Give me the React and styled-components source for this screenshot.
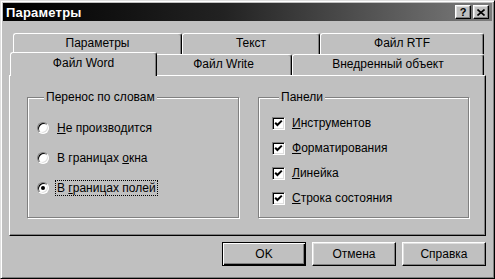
import styled, { createGlobalStyle } from "styled-components";

const GlobalStyle = createGlobalStyle`
  html, body {
    margin: 0;
    padding: 0;
    background: #c0c0c0;
  }
  body {
    font-family: "Liberation Sans", Arial, sans-serif;
    font-size: 12px;
    color: #000;
  }
`;

const Window = styled.div`
  width: 495px;
  height: 279px;
  box-sizing: border-box;
  background: #c0c0c0;
  border: 1px solid;
  border-color: #dfdfdf #000 #000 #dfdfdf;
  box-shadow: inset 1px 1px #fff, inset -1px -1px #808080;
  padding: 2px;
  display: flex;
  flex-direction: column;
`;

const TitleBar = styled.div`
  height: 18px;
  display: flex;
  align-items: center;
  padding: 0 3px 0 3px;
  background: linear-gradient(to right, #000 0%, #222 45%, #7c7c7c 100%);
`;

const Title = styled.span`
  flex: 1;
  color: #fff;
  font-weight: bold;
  font-size: 13px;
  letter-spacing: 0.2px;
`;

const CaptionButton = styled.button`
  width: 16px;
  height: 14px;
  margin-left: ${(p) => (p.$gap ? "2px" : "0")};
  padding: 0;
  background: #c0c0c0;
  border: 1px solid;
  border-color: #fff #000 #000 #fff;
  box-shadow: inset -1px -1px #808080, inset 1px 1px #dfdfdf;
  display: flex;
  align-items: center;
  justify-content: center;
  font-family: "Liberation Sans", Arial, sans-serif;
  font-weight: bold;
  font-size: 11px;
  line-height: 1;
  color: #000;
`;

const Content = styled.div`
  padding: 12px 6px 0 6px;
  display: flex;
  flex-direction: column;
`;

const TabControl = styled.div`
  display: flex;
  flex-direction: column;
`;

const TabRow = styled.div`
  height: ${(p) => p.$height}px;
  display: flex;
  align-items: ${(p) => (p.$front ? "flex-end" : "flex-start")};
  padding-left: ${(p) => p.$indent}px;
  position: relative;
  z-index: ${(p) => (p.$front ? 2 : 1)};
`;

const Tab = styled.div`
  box-sizing: border-box;
  width: ${(p) => p.$width}px;
  height: ${(p) => (p.$selected ? 24 : 21)}px;
  margin: ${(p) => (p.$selected ? "0 -2px -1px -2px" : "0")};
  flex-shrink: 0;
  position: relative;
  z-index: ${(p) => (p.$selected ? 3 : 1)};
  background: #c0c0c0;
  border-top: 1px solid #fff;
  border-left: 1px solid #fff;
  border-right: 1px solid #000;
  border-radius: 3px 3px 0 0;
  box-shadow: inset -1px 0 #808080;
  display: flex;
  justify-content: center;
  padding-top: ${(p) => (p.$selected ? 3 : 2)}px;
  white-space: nowrap;
`;

const Panel = styled.div`
  box-sizing: border-box;
  height: 161px;
  position: relative;
  z-index: 1;
  border: 1px solid;
  border-color: #fff #000 #000 #fff;
  box-shadow: inset -1px -1px #808080;
  display: flex;
  gap: 19px;
  padding: 14px 0 0 17px;
`;

const Group = styled.fieldset`
  box-sizing: border-box;
  width: ${(p) => p.$width}px;
  height: 128px;
  margin: 0;
  min-width: 0;
  padding: ${(p) => p.$padTop}px 0 0 ${(p) => p.$padLeft}px;
  border: 1px solid #808080;
  box-shadow: inset 1px 1px #fff, 1px 1px #fff;
  display: flex;
  flex-direction: column;
  gap: ${(p) => p.$gap}px;
`;

const Legend = styled.legend`
  padding: 0 2px;
  margin-left: 7px;
  background: #c0c0c0;
  line-height: 14px;
`;

const Option = styled.label`
  display: flex;
  align-items: center;
  height: 16px;
  gap: ${(p) => p.$gap}px;
  white-space: nowrap;
`;

const Radio = styled.span`
  box-sizing: border-box;
  width: 12px;
  height: 12px;
  border-radius: 50%;
  border: 1px solid;
  border-color: #808080 #fff #fff #808080;
  box-shadow: inset 1px 1px #000, inset -1px -1px #dfdfdf;
  background: #fff;
  display: flex;
  align-items: center;
  justify-content: center;
  &::after {
    content: "";
    width: 4px;
    height: 4px;
    border-radius: 50%;
    background: #000;
    display: ${(p) => (p.$checked ? "block" : "none")};
  }
`;

const Check = styled.span`
  box-sizing: border-box;
  width: 13px;
  height: 13px;
  border: 1px solid;
  border-color: #808080 #fff #fff #808080;
  box-shadow: inset 1px 1px #000, inset -1px -1px #dfdfdf;
  background: #fff;
  display: flex;
  align-items: center;
  justify-content: center;
`;

const LabelText = styled.span`
  padding: 0 1px;
  line-height: 14px;
  border: 1px dotted ${(p) => (p.$focus ? "#000" : "transparent")};
`;

const ButtonRow = styled.div`
  display: flex;
  justify-content: flex-end;
  gap: 6px;
  margin-top: 6px;
`;

const Button = styled.button`
  box-sizing: border-box;
  width: 84px;
  height: 24px;
  padding: 0;
  background: #c0c0c0;
  font-family: "Liberation Sans", Arial, sans-serif;
  font-size: 12px;
  color: #000;
  border: 1px solid;
  border-color: ${(p) => (p.$default ? "#000" : "#fff #000 #000 #fff")};
  box-shadow: ${(p) =>
    p.$default
      ? "inset 1px 1px #fff, inset -1px -1px #000, inset -2px -2px #808080"
      : "inset -1px -1px #808080, inset 1px 1px #dfdfdf"};
`;

function CheckMark() {
  return (
    <svg width="9" height="9" viewBox="0 0 9 9">
      <path d="M1.2 3.8 L3.4 6 L7.8 1.6" fill="none" stroke="#000" strokeWidth="2" />
    </svg>
  );
}

function CloseGlyph() {
  return (
    <svg width="8" height="7" viewBox="0 0 8 7">
      <path d="M0.5 0.5 L7.5 6.5 M7.5 0.5 L0.5 6.5" stroke="#000" strokeWidth="1.6" />
    </svg>
  );
}

const backTabs = [
  { label: "Параметры", width: 169 },
  { label: "Текст", width: 138 },
  { label: "Файл RTF", width: 164 },
];

const frontTabs = [
  { label: "Файл Word", width: 147, selected: true },
  { label: "Файл Write", width: 137 },
  { label: "Внедренный объект", width: 192 },
];

const radios = [
  { pre: "", key: "Н", post: "е производится" },
  { pre: "В границах ", key: "о", post: "кна" },
  { pre: "В ", key: "г", post: "раницах полей", checked: true },
];

const checks = [
  { key: "И", post: "нструментов" },
  { key: "Ф", post: "орматирования" },
  { key: "Л", post: "инейка" },
  { key: "С", post: "трока состояния" },
];

export default function App() {
  return (
    <>
      <GlobalStyle />
      <Window>
        <TitleBar>
          <Title>Параметры</Title>
          <CaptionButton>?</CaptionButton>
          <CaptionButton $gap>
            <CloseGlyph />
          </CaptionButton>
        </TitleBar>
        <Content>
          <TabControl>
            <TabRow $height={19} $indent={4}>
              {backTabs.map((t) => (
                <Tab key={t.label} $width={t.width}>
                  {t.label}
                </Tab>
              ))}
            </TabRow>
            <TabRow $height={23} $indent={3} $front>
              {frontTabs.map((t) => (
                <Tab key={t.label} $width={t.width} $selected={t.selected}>
                  {t.label}
                </Tab>
              ))}
            </TabRow>
            <Panel>
              <Group $width={212} $padTop={16} $padLeft={9} $gap={14}>
                <Legend>Перенос по словам</Legend>
                {radios.map((r) => (
                  <Option key={r.post} $gap={6}>
                    <Radio $checked={r.checked} />
                    <LabelText $focus={r.checked}>
                      {r.pre}
                      <u>{r.key}</u>
                      {r.post}
                    </LabelText>
                  </Option>
                ))}
              </Group>
              <Group $width={211} $padTop={11} $padLeft={13} $gap={9}>
                <Legend>Панели</Legend>
                {checks.map((c) => (
                  <Option key={c.post} $gap={5}>
                    <Check>
                      <CheckMark />
                    </Check>
                    <LabelText>
                      <u>{c.key}</u>
                      {c.post}
                    </LabelText>
                  </Option>
                ))}
              </Group>
            </Panel>
          </TabControl>
          <ButtonRow>
            <Button $default>OK</Button>
            <Button>Отмена</Button>
            <Button>Справка</Button>
          </ButtonRow>
        </Content>
      </Window>
    </>
  );
}
